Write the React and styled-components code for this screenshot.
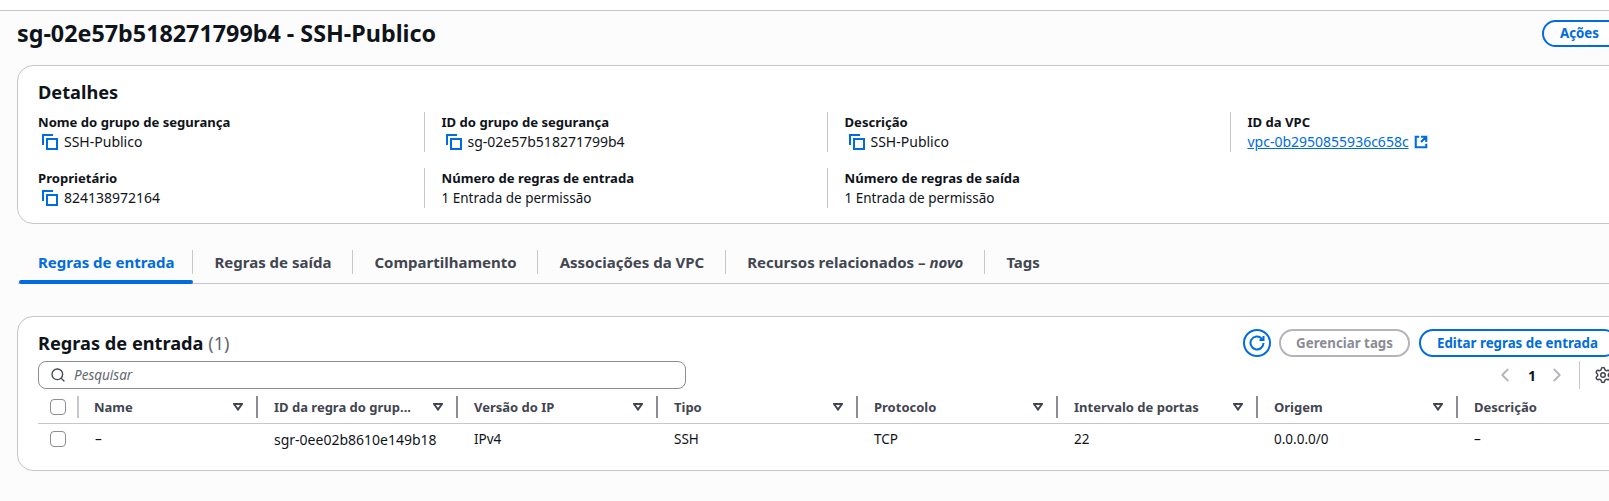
import React from "react";
import styled, { createGlobalStyle } from "styled-components";
import { ChevronLeft, ChevronRight, Search, Settings } from "lucide-react";

const GlobalStyle = createGlobalStyle`
  html, body {
    margin: 0;
    padding: 0;
    height: 501px;
    overflow: hidden;
    background: #fff;
  }
  * { box-sizing: border-box; }
`;

const Page = styled.div`
  width: 1609px;
  height: 501px;
  overflow: hidden;
  background: #fcfcfd;
  color: #0f141a;
  font-family: "Noto Sans", "Open Sans", sans-serif;
  font-size: 13.5px;
`;

const TopStrip = styled.div`
  height: 11px;
  background: #fff;
  border-bottom: 1px solid #c6c6cd;
`;

const Header = styled.header`
  display: flex;
  justify-content: space-between;
  align-items: center;
  height: 54px;
  padding: 0 0 10px 17px;
  width: 1640px;
`;

const Title = styled.h1`
  margin: 0;
  font-size: 23.3px;
  line-height: 28px;
  font-weight: 700;
`;

const Button = styled.button`
  height: 27px;
  border-radius: 14px;
  border: 2px solid ${(props) => (props.disabled ? "#b4b4bb" : "#006ce0")};
  background: #fff;
  color: ${(props) => (props.disabled ? "#8c8c94" : "#006ce0")};
  font: 700 13.3px "Noto Sans", sans-serif;
  padding: 0 16px;
  white-space: nowrap;
  flex: none;
`;

const ActionsButton = styled(Button)`
  width: 98px;
  text-align: left;
`;

const Panel = styled.section`
  margin-left: 17px;
  width: 1620px;
  background: #fff;
  border: 1px solid #c6c6cd;
  border-radius: 16px;
`;

const DetailsPanel = styled(Panel)`
  height: 159px;
  padding: 13px 0 0 20px;
`;

const PanelTitle = styled.h2`
  margin: 0;
  font-size: 18.2px;
  line-height: 26px;
  font-weight: 700;
`;

const DetailGrid = styled.div`
  display: grid;
  grid-template-columns: 386px 403px 403px 403px;
  grid-auto-rows: 40px;
  row-gap: 16px;
  margin-top: 7px;
`;

const Detail = styled.div`
  padding-left: ${(props) => (props.$first ? 0 : "16.5px")};
  border-left: ${(props) => (props.$first ? "none" : "1px solid #c6c6cd")};
  line-height: 20px;
`;

const Label = styled.div`
  font-size: 13.1px;
  font-weight: 700;
`;

const Value = styled.div`
  display: flex;
  align-items: center;
  gap: 6px;
  white-space: nowrap;
  font-size: ${(props) => (props.$id ? "14px" : "inherit")};
`;

const CopyGlyph = styled.svg`
  width: 16px;
  height: 16px;
  margin-left: 4px;
  flex: none;
  fill: none;
  stroke: #006ce0;
  stroke-width: 2;
`;

const Link = styled.a`
  color: #006ce0;
  text-decoration: underline;
  display: inline-flex;
  align-items: center;
  gap: 5px;
`;

const LinkGlyph = styled.svg`
  width: 14px;
  height: 14px;
  fill: none;
  stroke: #006ce0;
  stroke-width: 2.4;
`;

const Tabs = styled.nav`
  display: flex;
  margin: 26px 0 0 18px;
  height: 34px;
  border-bottom: 1px solid #c6c6cd;
`;

const Tab = styled.div`
  position: relative;
  height: 33px;
  padding: ${(props) => (props.$active ? "0 18.5px 0 20px" : "0 21.5px")};
  font-size: 15px;
  font-weight: 700;
  color: ${(props) => (props.$active ? "#006ce0" : "#424650")};
  white-space: nowrap;
  & > span {
    display: block;
    height: 24px;
    line-height: 24px;
  }
  &:not(:last-child)::after {
    content: "";
    position: absolute;
    right: 0;
    top: 0;
    height: 24px;
    border-right: 1px solid #c6c6cd;
  }
  ${(props) =>
    props.$active &&
    `&::before {
      content: "";
      position: absolute;
      left: 1px;
      right: 0;
      bottom: -1px;
      height: 4px;
      background: #006ce0;
      border-radius: 2px;
    }`}
`;

const RulesPanel = styled(Panel)`
  margin-top: 32px;
  height: 155px;
`;

const RulesHead = styled.div`
  display: flex;
  align-items: center;
  height: 40px;
  padding: 12px 0 0 20px;
  width: 1600px;
`;

const RulesTitle = styled(PanelTitle)`
  flex: 1;
  line-height: 28px;
`;

const Count = styled.span`
  font-weight: 400;
  color: #656871;
`;

const RefreshButton = styled.button`
  width: 28px;
  height: 28px;
  border-radius: 50%;
  border: 2px solid #006ce0;
  background: #fff;
  padding: 0;
  display: flex;
  align-items: center;
  justify-content: center;
  margin-right: 8px;
`;

const RefreshGlyph = styled.svg`
  width: 16px;
  height: 16px;
  fill: none;
  stroke: #006ce0;
  stroke-width: 2;
`;

const ManageButton = styled(Button)`
  width: 131px;
  height: 28px;
  padding: 0;
  margin-right: 9px;
`;

const EditButton = styled(Button)`
  width: 199px;
  height: 28px;
  text-align: left;
`;

const SearchRow = styled.div`
  display: flex;
  align-items: center;
  height: 28px;
  margin-top: 4px;
  padding-left: 20px;
  position: relative;
`;

const SearchBox = styled.div`
  width: 648px;
  height: 28px;
  border: 1px solid #8c8c94;
  border-radius: 8px;
  display: flex;
  align-items: center;
  gap: 8px;
  padding-left: 11px;
  color: #656871;
  font-style: italic;
`;

const Pager = styled.div`
  position: absolute;
  left: 1476px;
  top: 0;
  display: flex;
  align-items: center;
  height: 28px;
  font-weight: 700;
  font-size: 14px;
  & > span {
    width: 28px;
    margin-left: 2px;
    text-align: center;
  }
`;

const PagerRule = styled.div`
  height: 28px;
  margin-left: 11px;
  border-left: 1px solid #c6c6cd;
  padding-left: 14px;
  display: flex;
  align-items: center;
`;

const columns = "39px 179px 200px 200px 200px 200px 200px 200px 200px";

const HeadRow = styled.div`
  display: grid;
  grid-template-columns: ${columns};
  margin: 7px 0 0 20px;
  height: 28px;
  border-bottom: 1px solid #c6c6cd;
  padding-bottom: 5px;
`;

const HeadCell = styled.div`
  display: flex;
  align-items: center;
  justify-content: space-between;
  padding: 0 13px 0 ${(props) => (props.$name ? "15px" : "16px")};
  border-left: 2px solid ${(props) => (props.$name ? "#c6c6cd" : "#8c8c94")};
  font-size: 13px;
  font-weight: 700;
  color: #424650;
  white-space: nowrap;
`;

const BoxCell = styled.div`
  display: flex;
  align-items: center;
  padding-left: 12px;
`;

const Checkbox = styled.span`
  display: block;
  width: 16px;
  height: 16px;
  border: 1px solid #8c8c94;
  border-radius: 4px;
  background: #fff;
`;

const Caret = styled.svg`
  width: 10px;
  height: 8px;
  fill: none;
  stroke: #424650;
  stroke-width: 2;
`;

const BodyRow = styled.div`
  display: grid;
  grid-template-columns: ${columns};
  margin-left: 20px;
  height: 30px;
  align-items: center;
`;

const BodyCell = styled.div`
  padding-left: 18px;
  white-space: nowrap;
  font-size: ${(props) => (props.$id ? "14px" : "inherit")};
`;

const CopyIcon = () => (
  <CopyGlyph viewBox="0 0 16 16">
    <path d="M1 11V1h10" />
    <rect x="5" y="5" width="10" height="10" />
  </CopyGlyph>
);

const FilterCaret = () => (
  <Caret viewBox="0 0 10 8">
    <path d="M1 1h8L5 6.5z" />
  </Caret>
);

const headers = [
  "Name",
  "ID da regra do grup...",
  "Versão do IP",
  "Tipo",
  "Protocolo",
  "Intervalo de portas",
  "Origem",
];

const cells = ["–", "sgr-0ee02b8610e149b18", "IPv4", "SSH", "TCP", "22", "0.0.0.0/0", "–"];

const App = () => {
  return (
    <Page>
      <GlobalStyle />
      <TopStrip />
      <Header>
        <Title>sg-02e57b518271799b4 - SSH-Publico</Title>
        <ActionsButton>Ações</ActionsButton>
      </Header>

      <DetailsPanel>
        <PanelTitle>Detalhes</PanelTitle>
        <DetailGrid>
          <Detail $first>
            <Label>Nome do grupo de segurança</Label>
            <Value $id><CopyIcon />SSH-Publico</Value>
          </Detail>
          <Detail>
            <Label>ID do grupo de segurança</Label>
            <Value $id><CopyIcon />sg-02e57b518271799b4</Value>
          </Detail>
          <Detail>
            <Label>Descrição</Label>
            <Value $id><CopyIcon />SSH-Publico</Value>
          </Detail>
          <Detail>
            <Label>ID da VPC</Label>
            <Value $id>
              <Link href="#">
                vpc-0b2950855936c658c
                <LinkGlyph viewBox="0 0 16 16">
                  <path d="M14 8V2H8M14 2 8 8M6 2H2v12h12v-4" />
                </LinkGlyph>
              </Link>
            </Value>
          </Detail>
          <Detail $first>
            <Label>Proprietário</Label>
            <Value $id><CopyIcon />824138972164</Value>
          </Detail>
          <Detail>
            <Label>Número de regras de entrada</Label>
            <Value>1 Entrada de permissão</Value>
          </Detail>
          <Detail>
            <Label>Número de regras de saída</Label>
            <Value>1 Entrada de permissão</Value>
          </Detail>
        </DetailGrid>
      </DetailsPanel>

      <Tabs>
        <Tab $active><span>Regras de entrada</span></Tab>
        <Tab><span>Regras de saída</span></Tab>
        <Tab><span>Compartilhamento</span></Tab>
        <Tab><span>Associações da VPC</span></Tab>
        <Tab><span>Recursos relacionados – <em>novo</em></span></Tab>
        <Tab><span>Tags</span></Tab>
      </Tabs>

      <RulesPanel>
        <RulesHead>
          <RulesTitle>Regras de entrada <Count>(1)</Count></RulesTitle>
          <RefreshButton>
            <RefreshGlyph viewBox="0 0 16 16">
              <path d="M14.5 8A6.5 6.5 0 1 1 12.6 3.4L14.5 5" />
              <path d="M14.5 1v4h-4" />
            </RefreshGlyph>
          </RefreshButton>
          <ManageButton disabled>Gerenciar tags</ManageButton>
          <EditButton>Editar regras de entrada</EditButton>
        </RulesHead>
        <SearchRow>
          <SearchBox>
            <Search size={16} color="#424650" strokeWidth={2} />
            Pesquisar
          </SearchBox>
          <Pager>
            <ChevronLeft size={22} color="#b4b4bb" />
            <span>1</span>
            <ChevronRight size={22} color="#b4b4bb" />
            <PagerRule>
              <Settings size={18} color="#424650" strokeWidth={2} />
            </PagerRule>
          </Pager>
        </SearchRow>
        <HeadRow>
          <BoxCell><Checkbox /></BoxCell>
          {headers.map((h, i) => (
            <HeadCell key={h} $name={i === 0}>
              {h}
              <FilterCaret />
            </HeadCell>
          ))}
          <HeadCell>Descrição</HeadCell>
        </HeadRow>
        <BodyRow>
          <BoxCell><Checkbox /></BoxCell>
          {cells.map((c, i) => (
            <BodyCell key={i} $id={i === 1}>{c}</BodyCell>
          ))}
        </BodyRow>
      </RulesPanel>
    </Page>
  );
};

export default App;
